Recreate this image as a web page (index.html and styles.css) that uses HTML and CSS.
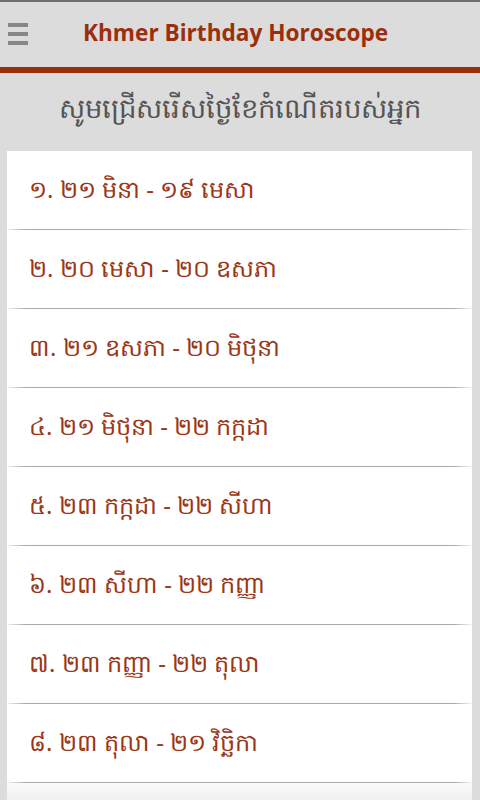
FILE: index.html
```html
<!DOCTYPE html>
<html lang="km">
<head>
<meta charset="utf-8">
<title>Khmer Birthday Horoscope</title>
<link rel="stylesheet" href="styles.css">
</head>
<body>
<div class="app">
  <header class="topbar">
    <button class="menu" aria-label="Menu">
      <span></span><span></span><span></span>
    </button>
    <h1 class="title">Khmer Birthday Horoscope</h1>
  </header>
  <div class="subtitle">សូមជ្រើសរើសថ្ងៃខែកំណើតរបស់អ្នក</div>
  <ul class="list">
    <li class="row">១. ២១ មិនា - ១៩ មេសា</li>
    <li class="row">២. ២០ មេសា - ២០ ឧសភា</li>
    <li class="row">៣. ២១ ឧសភា - ២០ មិថុនា</li>
    <li class="row">៤. ២១ មិថុនា - ២២ កក្កដា</li>
    <li class="row">៥. ២៣ កក្កដា - ២២ សីហា</li>
    <li class="row">៦. ២៣ សីហា - ២២ កញ្ញា</li>
    <li class="row">៧. ២៣ កញ្ញា - ២២ តុលា</li>
    <li class="row">៨. ២៣ តុលា - ២១ វិច្ឆិកា</li>
    <li class="row pressed"></li>
  </ul>
</div>
</body>
</html>
```
FILE: styles.css
```css
html, body {
  margin: 0;
  padding: 0;
  background: #dcdcdc;
  height: 800px;
  overflow: hidden;
}

.app {
  width: 480px;
  font-family: "Noto Sans", "DejaVu Sans", sans-serif;
}

.topbar {
  display: flex;
  align-items: center;
  box-sizing: border-box;
  height: 73px;
  border-top: 2px solid #6e6e6e;
  border-bottom: 6px solid #9b2f0d;
  background: #dcdcdc;
}

.menu {
  width: 20px;
  height: 22px;
  margin: 0 0 0 8px;
  padding: 0;
  border: 0;
  background: none;
  display: flex;
  flex-direction: column;
  justify-content: space-between;
  position: relative;
  top: -1px;
}

.menu span {
  display: block;
  height: 4px;
  background: #878787;
}

.title {
  margin: 0 0 0 55px;
  font-family: "Open Sans", "Noto Sans", sans-serif;
  font-weight: 700;
  font-size: 22.6px;
  color: #9b2f0d;
  position: relative;
  top: -2px;
}

.subtitle {
  height: 78px;
  display: flex;
  align-items: center;
  justify-content: center;
  font-size: 27.5px;
  color: #555;
  position: relative;
  top: -2px;
}

.list {
  list-style: none;
  margin: 0 8px 0 7px;
  padding: 0;
  background: #fff;
}

.row {
  height: 79px;
  box-sizing: border-box;
  padding-left: 22px;
  display: flex;
  align-items: center;
  font-size: 24px;
  color: #9b3616;
  background:
    linear-gradient(to right, #f2f2f2, #a9a9a9 4%, #a9a9a9 96%, #f2f2f2) bottom / 100% 1px no-repeat,
    #fff;
}

/* highlighted item below the fold */
.row.pressed {
  background: linear-gradient(#fbfbfb, #ebebeb 25px);
}
```
